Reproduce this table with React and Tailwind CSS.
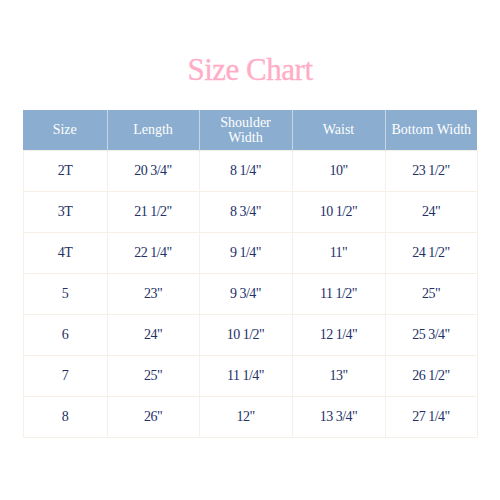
import React from 'react'

const ROWS = [
  ['2T', '20 3/4"', '8 1/4"', '10"', '23 1/2"'],
  ['3T', '21 1/2"', '8 3/4"', '10 1/2"', '24"'],
  ['4T', '22 1/4"', '9 1/4"', '11"', '24 1/2"'],
  ['5', '23"', '9 3/4"', '11 1/2"', '25"'],
  ['6', '24"', '10 1/2"', '12 1/4"', '25 3/4"'],
  ['7', '25"', '11 1/4"', '13"', '26 1/2"'],
  ['8', '26"', '12"', '13 3/4"', '27 1/4"'],
]

const COLS = ['w-[84px]', 'w-[92px]', 'w-[93px]', 'w-[93px]', 'w-[92px]']

export default function App() {
  return (
    <div className="w-[500px] h-[500px] bg-white flex flex-col items-center font-['Liberation_Serif',serif]">
      <h1 className="mt-[50px] h-[40px] text-[31px] leading-[40px] text-[#ffadc6] tracking-[-0.5px] [-webkit-text-stroke:0.3px_#ffadc6]">Size Chart</h1>
      <table className="mt-[20px] w-[454px] border-collapse table-fixed font-['Liberation_Serif',serif]">
        <thead>
          <tr className="bg-[#8aadd0] text-white text-[14px] leading-[15px] h-[40px]">
            {['Size', 'Length', 'Shoulder Width', 'Waist', 'Bottom Width'].map((h, i) => (
              <th key={h} className={`${COLS[i]} font-normal border-x border-[#c5d6e8] first:border-l-0 last:border-r-0 px-1`}>
                {h === 'Shoulder Width' ? <>Shoulder<br />Width</> : h}
              </th>
            ))}
          </tr>
        </thead>
        <tbody>
          {ROWS.map((r) => (
            <tr key={r[0]} className="h-[41px] text-[14px] text-[#243068]">
              {r.map((c, i) => (
                <td key={i} className="border border-[#f6f0e6] text-center tracking-[-0.5px]">{c}</td>
              ))}
            </tr>
          ))}
        </tbody>
      </table>
    </div>
  )
}
